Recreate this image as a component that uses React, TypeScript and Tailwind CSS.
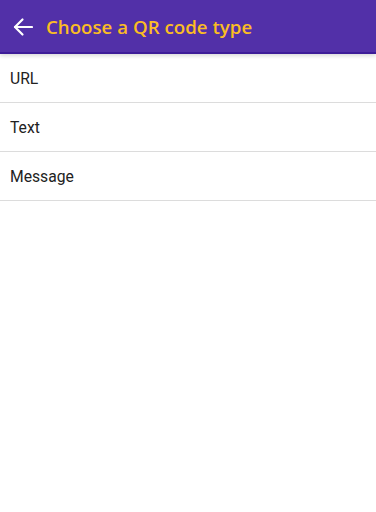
export default function App() {
	const items = ["URL", "Text", "Message"];
	return (
		<div className="h-[512px] w-[376px] bg-white">
			<header className="relative flex h-[54px] items-center border-b-2 border-[#3d1c98] bg-[#5230a8] pt-[2px] shadow-[0_2px_4px_rgba(0,0,0,0.15)]">
				<svg
					className="ml-[13px] h-[20px] w-[20px]"
					viewBox="0 0 20 20"
					fill="none"
					stroke="white"
					strokeWidth="2.2"
					strokeLinecap="round"
					strokeLinejoin="round"
				>
					<path d="M19 10H2" />
					<path d="M9.5 2.5 2 10l7.5 7.5" />
				</svg>
				<h1 className="ml-[13px] font-['Open_Sans',sans-serif] text-[18.7px] font-semibold text-[#fbbd24]">
					Choose a QR code type
				</h1>
			</header>
			<ul>
				{items.map((item) => (
					<li
						key={item}
						className="flex h-[49px] items-center border-b border-[#dcdcdc] px-[10px] pt-[2px] font-['Roboto',sans-serif] text-[15.7px] text-[#222]"
					>
						{item}
					</li>
				))}
			</ul>
		</div>
	);
}
